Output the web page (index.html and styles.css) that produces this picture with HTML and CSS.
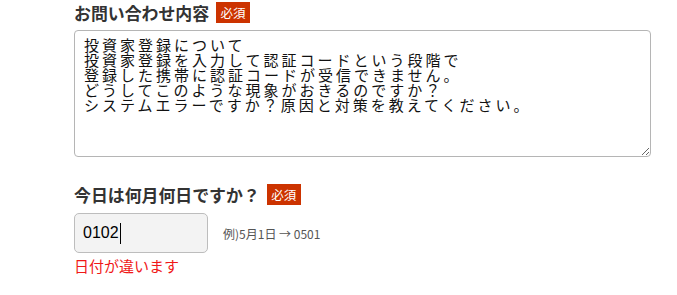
FILE: index.html
```html
<!DOCTYPE html>
<html lang="ja">
<head>
<meta charset="utf-8">
<title>お問い合わせ</title>
<link rel="stylesheet" href="styles.css">
</head>
<body>
<form class="form">
  <div class="label-row first">
    <span class="label">お問い合わせ内容</span>
    <span class="badge">必須</span>
  </div>
  <textarea class="message">投資家登録について
投資家登録を入力して認証コードという段階で
登録した携帯に認証コードが受信できません。
どうしてこのような現象がおきるのですか？
システムエラーですか？原因と対策を教えてください。</textarea>

  <div class="label-row second">
    <span class="label">今日は何月何日ですか？</span>
    <span class="badge">必須</span>
  </div>
  <div class="input-row">
    <div class="date-input" role="textbox">0102<span class="caret"></span></div>
    <span class="hint">例)5月1日 → 0501</span>
  </div>
  <div class="error">日付が違います</div>
</form>
</body>
</html>
```
FILE: styles.css
```css
html, body {
  margin: 0;
  background: #fff;
}
body {
  font-family: "Noto Sans CJK JP", "Noto Sans", sans-serif;
  color: #333;
}
.form {
  padding-left: 74px;
  display: flex;
  flex-direction: column;
  align-items: flex-start;
}
.label-row {
  display: flex;
  align-items: center;
  gap: 7px;
  height: 21px;
}
.label-row.first {
  margin-top: 2px;
}
.label-row.second {
  margin-top: 27px;
}
.label {
  font-size: 16.9px;
  font-weight: bold;
  color: #333;
  line-height: 21px;
}
.badge {
  background: #cc3300;
  color: #fff;
  font-size: 12.5px;
  line-height: 21px;
  height: 21px;
  padding: 0 4px;
  box-sizing: border-box;
  width: 34px;
  text-align: center;
}
.message {
  margin: 7px 0 0 0;
  width: 577px;
  height: 127px;
  box-sizing: border-box;
  border: 1px solid #b5b5b5;
  border-radius: 4px;
  padding: 6px 9px;
  font-family: "Noto Sans CJK JP", sans-serif;
  font-size: 15px;
  line-height: 15px;
  letter-spacing: 3px;
  color: #111;
  background: #fff;
  resize: both;
  overflow: hidden;
}
.input-row {
  margin-top: 8px;
  display: flex;
  align-items: center;
  gap: 15px;
}
.date-input {
  width: 134px;
  height: 40px;
  box-sizing: border-box;
  background: #f3f3f3;
  border: 1px solid #bdbdbd;
  border-radius: 5px;
  padding: 0 8px;
  display: flex;
  align-items: center;
  font-family: "Liberation Sans", Arial, sans-serif;
  font-size: 16px;
  color: #000;
}
.caret {
  display: inline-block;
  width: 1px;
  height: 21px;
  background: #000;
  margin-left: 1px;
}
.hint {
  font-size: 12px;
  color: #555;
}
.error {
  margin-top: 2px;
  font-size: 15px;
  line-height: 22px;
  color: #f01818;
}
```
